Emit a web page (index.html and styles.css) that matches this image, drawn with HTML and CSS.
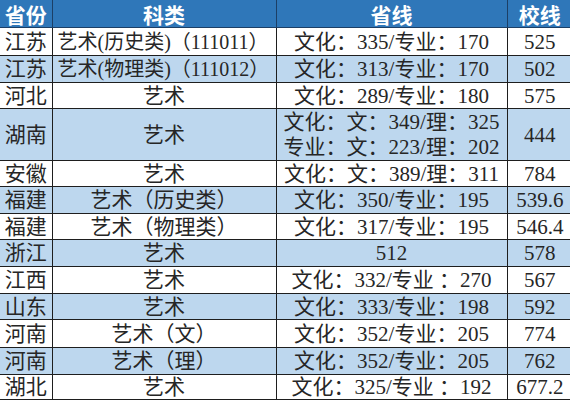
FILE: index.html
```html
<!DOCTYPE html>
<html lang="zh">
<head>
<meta charset="utf-8">
<link rel="stylesheet" href="styles.css">
</head>
<body>
<table class="score">
  <colgroup>
    <col class="c-prov"><col class="c-cat"><col class="c-line"><col class="c-school">
  </colgroup>
  <thead>
    <tr class="head">
      <th>省份</th><th>科类</th><th>省线</th><th>校线</th>
    </tr>
  </thead>
  <tbody>
    <tr class="w h28"><td>江苏</td><td class="left">艺术(历史类)（111011）</td><td>文化：335/专业：170</td><td>525</td></tr>
    <tr class="b h27"><td>江苏</td><td class="left">艺术(物理类)（111012）</td><td>文化：313/专业：170</td><td>502</td></tr>
    <tr class="w h26"><td>河北</td><td>艺术</td><td>文化：289/专业：180</td><td>575</td></tr>
    <tr class="b tall"><td>湖南</td><td>艺术</td><td class="two">文化：文：349/理：325<br>专业：文：223/理：202</td><td>444</td></tr>
    <tr class="w h26"><td>安徽</td><td>艺术</td><td>文化：文：389/理：311</td><td>784</td></tr>
    <tr class="b h27"><td>福建</td><td>艺术（历史类）</td><td>文化：350/专业：195</td><td>539.6</td></tr>
    <tr class="w h26"><td>福建</td><td>艺术（物理类）</td><td>文化：317/专业：195</td><td>546.4</td></tr>
    <tr class="b h27"><td>浙江</td><td>艺术</td><td>512</td><td>578</td></tr>
    <tr class="w h27"><td>江西</td><td>艺术</td><td>文化：332/专业 ：270</td><td>567</td></tr>
    <tr class="b h26"><td>山东</td><td>艺术</td><td>文化：333/专业：198</td><td>592</td></tr>
    <tr class="w h28"><td>河南</td><td>艺术（文）</td><td>文化：352/专业：205</td><td>774</td></tr>
    <tr class="b h27"><td>河南</td><td>艺术（理）</td><td>文化：352/专业：205</td><td>762</td></tr>
    <tr class="w h25"><td>湖北</td><td>艺术</td><td>文化：325/专业 ：192</td><td>677.2</td></tr>
  </tbody>
</table>
</body>
</html>
```
FILE: styles.css
```css
html, body {
  margin: 0;
  padding: 0;
  background: #ffffff;
}
.score {
  border-collapse: collapse;
  table-layout: fixed;
  width: 572px;
  font-family: "Liberation Serif", "Noto Sans CJK SC", serif;
  font-size: 21px;
  color: #262626;
}
.c-prov { width: 52px; }
.c-cat { width: 224px; }
.c-line { width: 231px; }
.c-school { width: 65px; }
.score th,
.score td {
  border: 1px solid #1e1e1e;
  padding: 0;
  text-align: center;
  white-space: nowrap;
  line-height: 24px;
}
.score tr > :first-child { border-left: none; }
.score tr > :last-child { border-right: none; }
.head th {
  background: #2f77b9;
  color: #ffffff;
  font-family: "Noto Sans CJK SC", sans-serif;
  font-weight: bold;
  border-top: none;
  border-color: #1c3f66;
  height: 27px;
  line-height: 24px;
}
.h25 { height: 25px; }
.h26 { height: 26px; }
.h27 { height: 27px; }
.h28 { height: 28px; }
.score tbody tr.tall { height: 52px; }
.w td { background: #ffffff; }
.b td { background: #bdd7ee; }
.score td.left {
  text-align: left;
  padding-left: 5px;
  font-size: 20px;
}
.score td.two { line-height: 25px; }
```
